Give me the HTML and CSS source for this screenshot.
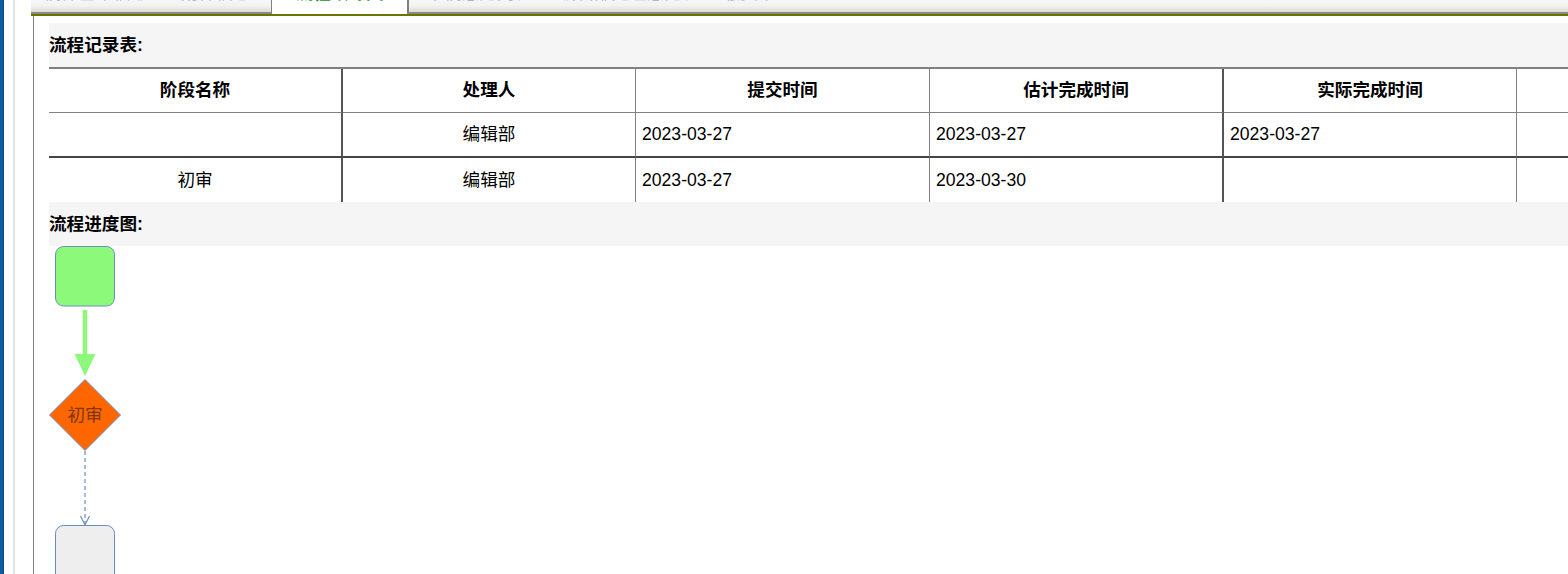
FILE: index.html
```html
<!DOCTYPE html>
<html lang="zh-CN">
<head>
    <meta charset="UTF-8">
    <title>流程进度跟踪</title>
    <link rel="stylesheet" href="styles.css">
</head>
<body>
    <div class="frame">
        <div class="edge">
            <div class="edge-blue"></div>
            <div class="edge-gap"></div>
            <div class="edge-line"></div>
        </div>
        <div class="main">
            <div class="tabbar">
                <div class="tab t1"><span>稿件基本信息</span></div>
                <div class="tab t2"><span>附件信息</span></div>
                <div class="tab t3 active"><span>流程跟踪图</span></div>
                <div class="tab t4"><span>审稿意见列表</span></div>
                <div class="tab t5"><span>编辑部处理意见表</span></div>
                <div class="tab t6"><span>缴费单</span></div>
            </div>
            <div class="olive"></div>

            <div class="content">
                <div class="bar">流程记录表:</div>
                <table class="records">
                    <thead>
                        <tr>
                            <th class="c1">阶段名称</th>
                            <th class="c2">处理人</th>
                            <th class="c3">提交时间</th>
                            <th class="c4">估计完成时间</th>
                            <th class="c5">实际完成时间</th>
                            <th class="c6"></th>
                        </tr>
                    </thead>
                    <tbody>
                        <tr class="done">
                            <td class="c1 mid"></td>
                            <td class="c2 mid">编辑部</td>
                            <td class="c3">2023-03-27</td>
                            <td class="c4">2023-03-27</td>
                            <td class="c5">2023-03-27</td>
                            <td class="c6"></td>
                        </tr>
                        <tr>
                            <td class="c1 mid">初审</td>
                            <td class="c2 mid">编辑部</td>
                            <td class="c3">2023-03-27</td>
                            <td class="c4">2023-03-30</td>
                            <td class="c5"></td>
                            <td class="c6"></td>
                        </tr>
                    </tbody>
                </table>

                <div class="bar">流程进度图:</div>
                <svg class="flow" width="200" height="330" viewBox="0 0 200 330">
                    <rect x="6.5" y="0.5" width="59" height="59.5" rx="8" fill="#8cf97a" stroke="#6c8ebf" stroke-width="1"/>
                    <line x1="36" y1="64" x2="36" y2="110" stroke="#8cf97a" stroke-width="4.5"/>
                    <polygon points="25.5,108 46.5,108 36,130" fill="#8cf97a"/>
                    <polygon points="36,133.5 71.5,169 36,204.5 0.5,169" fill="#ff6600" stroke="#6c8ebf" stroke-width="1"/>
                    <text x="36" y="175" text-anchor="middle" class="node-label">初审</text>
                    <line x1="36" y1="205" x2="36" y2="278" stroke="#6c8ebf" stroke-width="1.2" stroke-dasharray="4 3"/>
                    <polyline points="31.5,270 36,279 40.5,270" fill="none" stroke="#6c8ebf" stroke-width="1.2"/>
                    <rect x="6.5" y="279.5" width="59" height="80" rx="8" fill="#eeeeee" stroke="#6c8ebf" stroke-width="1"/>
                </svg>
            </div>
        </div>
    </div>
</body>
</html>
```

FILE: styles.css
```css
html, body {
    margin: 0;
    padding: 0;
    overflow: hidden;
    background: #fff;
}
body {
    font-family: "Liberation Sans", "Noto Sans CJK SC", sans-serif;
    font-size: 17.6px;
    color: #000;
}
.frame {
    display: flex;
    height: 574px;
}
.edge {
    display: flex;
    width: 31px;
    flex: none;
}
.edge-blue {
    width: 3px;
    background: #0f5ca5;
    border-right: 1px solid #0a4a88;
}
.edge-gap {
    width: 9px;
}
.edge-line {
    width: 2px;
    background: #e4e4e4;
}
.main {
    flex: 1;
    min-width: 0;
    display: flex;
    flex-direction: column;
}
.tabbar {
    display: flex;
    height: 12px;
    background: linear-gradient(#f6f6f5, #f3f3f1 45%, #dcdcd3);
    border-bottom: 2px solid #8a8a8a;
}
.tab {
    height: 12px;
    overflow: hidden;
    text-align: center;
    color: #a9b2d2;
    font-size: 17.6px;
    line-height: 18px;
    white-space: nowrap;
}
.tab span {
    display: block;
    margin-top: -16px;
}
.t1 { width: 130px; }
.t2 { width: 110px; }
.t3 { width: 135px; }
.t4 { width: 140px; }
.t5 { width: 160px; }
.t6 { width: 80px; }
.tab.active {
    height: 14px;
    margin-bottom: -2px;
    background: #fff;
    border-left: 1px solid #808080;
    border-right: 2px solid #808080;
    color: #1a8f1a;
    font-weight: bold;
}
.olive {
    height: 2px;
    background: #6b7400;
}
.content {
    flex: 1;
    margin-left: 2px;
    border-left: 1px solid #808080;
    padding: 7px 0 0 15px;
    overflow: hidden;
}
.bar {
    height: 44px;
    line-height: 44px;
    background: #f5f5f5;
    font-weight: bold;
    white-space: nowrap;
}
.records {
    width: 1761px;
    table-layout: fixed;
    border-collapse: separate;
    border-spacing: 0;
    border-top: 2px solid #808080;
}
.records th, .records td {
    box-sizing: border-box;
    padding: 0 0 0 6px;
    height: 44px;
    line-height: 43px;
    border-right: 1px solid #808080;
    white-space: nowrap;
    text-align: left;
    font-weight: normal;
}
.records th {
    font-weight: bold;
    text-align: center;
    padding: 0;
    border-bottom: 1px solid #808080;
}
.records .mid {
    text-align: center;
    padding: 0;
}
.records tr.done td {
    height: 45px;
    border-bottom: 2px solid #444;
}
.records .c1 { width: 294px; border-right: 2px solid #555; }
.records .c2 { width: 293px; }
.records .c3 { width: 294px; }
.records .c4 { width: 294px; border-right: 2px solid #555; }
.records .c5 { width: 293px; }
.records .c6 { width: 293px; }
.flow {
    display: block;
}
.node-label {
    font-family: "Noto Sans CJK SC", sans-serif;
    font-size: 17.6px;
    fill: #7e3708;
}
```
